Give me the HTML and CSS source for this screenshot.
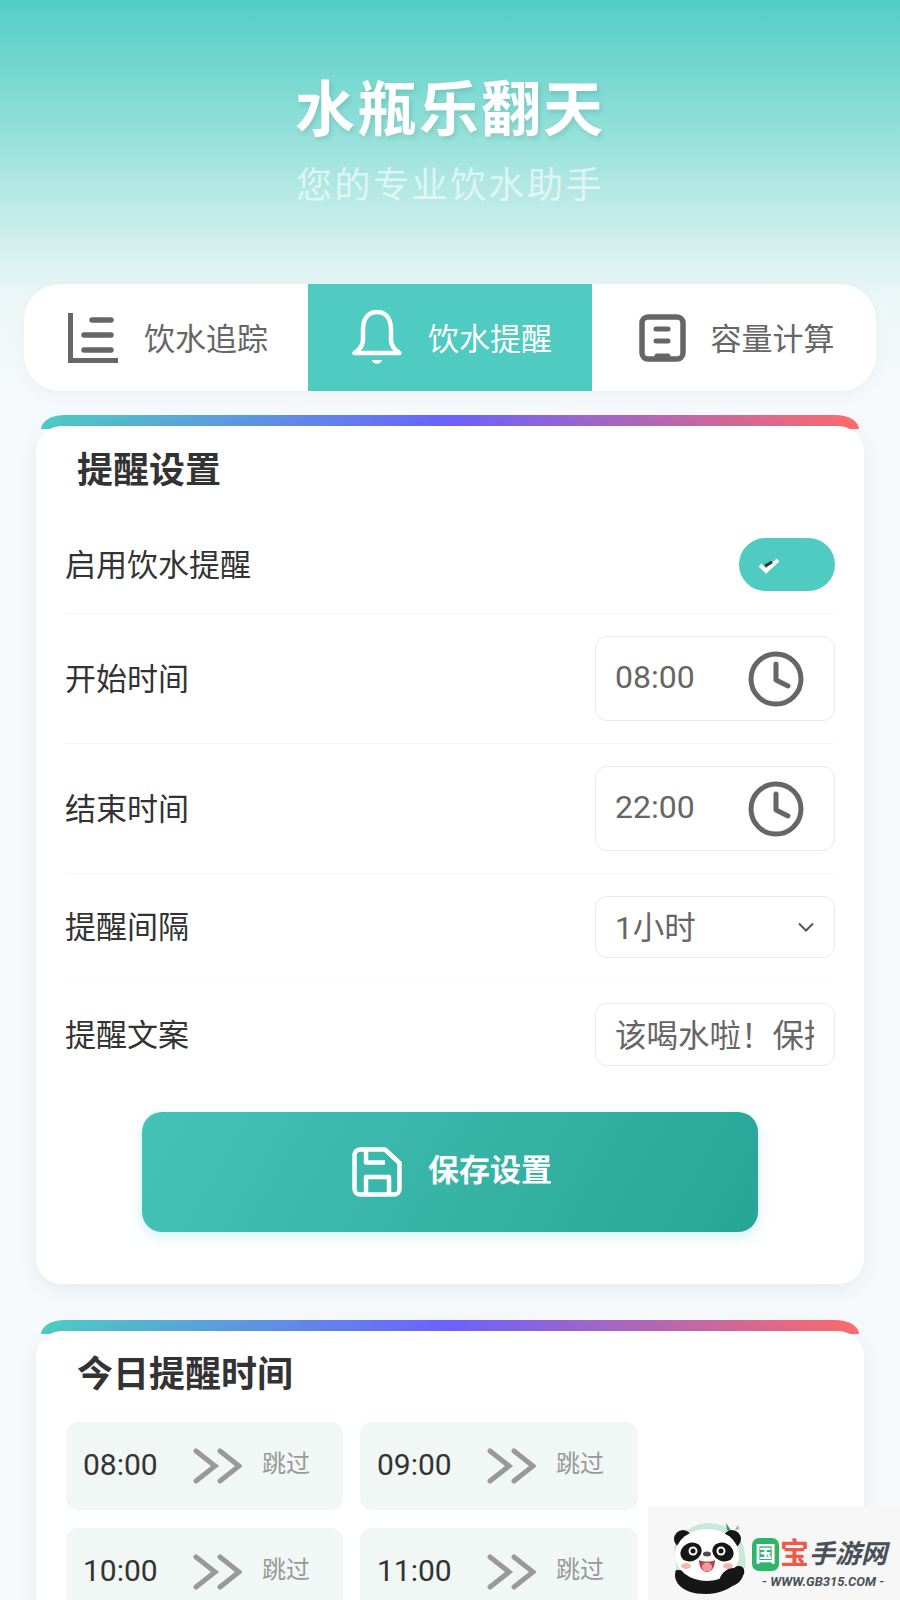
FILE: index.html
```html
<!DOCTYPE html>
<html lang="zh-CN">
<head>
    <meta charset="UTF-8">
    <meta name="viewport" content="width=device-width, initial-scale=1.0">
    <title>水瓶乐翻天</title>
    <link rel="stylesheet" href="styles.css">
</head>
<body>
    <header class="header">
        <h1>水瓶乐翻天</h1>
        <p>您的专业饮水助手</p>
    </header>

    <nav class="tabs">
        <div class="tab">
            <svg class="tab-icon" viewBox="0 0 50 50" fill="none" stroke="#666" stroke-width="5">
                <path d="M2.5 0V47.500H50"/>
                <path d="M24 7H43M16 22H43M16 37H43" stroke-width="5.500" stroke-linecap="round"/>
            </svg>
            <span>饮水追踪</span>
        </div>
        <div class="tab active">
            <svg class="tab-icon" viewBox="0 0 50 56" fill="none" stroke="#fff" stroke-width="4.500" stroke-linejoin="round">
                <path d="M25 2C15 2 11 10 11 20V30C11 36 7 40 2.500 43H47.500C43 40 39 36 39 30V20C39 10 35 2 25 2Z"/>
                <path d="M20 50C21 55 29 55 30 50Z" fill="#fff" stroke="none"/>
            </svg>
            <span>饮水提醒</span>
        </div>
        <div class="tab tab-last">
            <svg class="tab-icon" viewBox="0 0 50 50" fill="none" stroke="#666" stroke-width="5.500">
                <rect x="4" y="4" width="41" height="42" rx="6"/>
                <path d="M18 16H30M18 28H30M19 43H30" stroke-width="5" stroke-linecap="round"/>
            </svg>
            <span>容量计算</span>
        </div>
    </nav>

    <div class="card-bar"></div>
    <section class="card">
        <h2 class="card-title">提醒设置</h2>

        <div class="row">
            <label>启用饮水提醒</label>
            <div class="toggle">
                <svg viewBox="0 0 22 18" width="22" height="18" fill="none">
                    <path d="M2 9L8 15L20 4" stroke="#fff" stroke-width="4"/>
                    <path d="M7 10L14 6" stroke="#2b3a3a" stroke-width="3"/>
                </svg>
            </div>
        </div>

        <div class="row">
            <label>开始时间</label>
            <div class="field time-field">
                <span>08:00</span>
                <svg class="clock" viewBox="0 0 56 56" fill="none" stroke="#666" stroke-width="5" stroke-linecap="round" stroke-linejoin="round">
                    <circle cx="28" cy="28" r="25"/>
                    <path d="M28 13V29L40 35"/>
                </svg>
            </div>
        </div>

        <div class="row">
            <label>结束时间</label>
            <div class="field time-field">
                <span>22:00</span>
                <svg class="clock" viewBox="0 0 56 56" fill="none" stroke="#666" stroke-width="5" stroke-linecap="round" stroke-linejoin="round">
                    <circle cx="28" cy="28" r="25"/>
                    <path d="M28 13V29L40 35"/>
                </svg>
            </div>
        </div>

        <div class="row faint">
            <label>提醒间隔</label>
            <div class="field select-field">
                <span>1小时</span>
                <svg viewBox="0 0 16 10" width="16" height="10" fill="none" stroke="#555" stroke-width="2">
                    <path d="M1 1.500L8 8.500L15 1.500"/>
                </svg>
            </div>
        </div>

        <div class="row no-line">
            <label>提醒文案</label>
            <input class="field text-field" type="text" value="该喝水啦！保持水分，身体健康" readonly>
        </div>

        <button class="save-btn" type="button">
            <svg viewBox="0 0 50 50" width="50" height="50" fill="none" stroke="#fff" stroke-width="4.500" stroke-linejoin="round">
                <path d="M8 2.500H33L47.500 16V42A5.500 5.500 0 0 1 42 47.500H8A5.500 5.500 0 0 1 2.500 42V8A5.500 5.500 0 0 1 8 2.500Z"/>
                <path d="M14 3V15.500H33M14 47V30H37V47"/>
            </svg>
            <span>保存设置</span>
        </button>
    </section>

    <div class="card-bar second"></div>
    <section class="card">
        <h2 class="card-title today">今日提醒时间</h2>
        <div class="time-grid">
            <div class="time-item">
                <span class="time">08:00</span>
                <svg class="skip-icon" viewBox="0 0 49 36" fill="none" stroke="#999" stroke-width="5" stroke-linecap="round"><path d="M3 3L22 18L3 33M27 3L46 18L27 33"/></svg>
                <span class="skip">跳过</span>
            </div>
            <div class="time-item">
                <span class="time">09:00</span>
                <svg class="skip-icon" viewBox="0 0 49 36" fill="none" stroke="#999" stroke-width="5" stroke-linecap="round"><path d="M3 3L22 18L3 33M27 3L46 18L27 33"/></svg>
                <span class="skip">跳过</span>
            </div>
            <div class="time-item">
                <span class="time">10:00</span>
                <svg class="skip-icon" viewBox="0 0 49 36" fill="none" stroke="#999" stroke-width="5" stroke-linecap="round"><path d="M3 3L22 18L3 33M27 3L46 18L27 33"/></svg>
                <span class="skip">跳过</span>
            </div>
            <div class="time-item">
                <span class="time">11:00</span>
                <svg class="skip-icon" viewBox="0 0 49 36" fill="none" stroke="#999" stroke-width="5" stroke-linecap="round"><path d="M3 3L22 18L3 33M27 3L46 18L27 33"/></svg>
                <span class="skip">跳过</span>
            </div>
        </div>
    </section>

    <div class="watermark">
        <svg class="panda" viewBox="0 0 78 72">
            <path d="M4 26A37 37 0 0 1 74 26L76 44L66 60H8Z" fill="#c9e8da"/>
            <path d="M56 1L62 10L57 8Z" fill="#3c8f5c"/>
            <path d="M68 3L65 8L69 7Z" fill="#7fb58f"/>
            <circle cx="13" cy="17" r="9" fill="#161616"/>
            <circle cx="62" cy="17" r="9" fill="#161616"/>
            <path d="M6 48C2 58 10 72 36 72C50 72 62 66 66 60L74 52C76 44 68 42 64 46L52 50Z" fill="#161616"/>
            <ellipse cx="37" cy="33" rx="32" ry="26" fill="#fff"/>
            <ellipse cx="21" cy="30" rx="11" ry="9" fill="#161616" transform="rotate(-25 21 30)"/>
            <ellipse cx="53" cy="30" rx="11" ry="9" fill="#161616" transform="rotate(25 53 30)"/>
            <circle cx="23" cy="29" r="4.500" fill="#fff"/>
            <circle cx="51" cy="29" r="4.500" fill="#fff"/>
            <circle cx="23" cy="29" r="2.500" fill="#161616"/>
            <circle cx="51" cy="29" r="2.500" fill="#161616"/>
            <ellipse cx="37" cy="32" rx="4" ry="2.500" fill="#55484a"/>
            <path d="M29 38C33 40 41 40 45 38C45 46 41 50 37 50C33 50 29 46 29 38Z" fill="#b8404a"/>
            <ellipse cx="37" cy="45" rx="5" ry="4.500" fill="#f29aa0"/>
            <ellipse cx="16" cy="44" rx="5" ry="3" fill="#f6b7b0"/>
            <ellipse cx="58" cy="44" rx="5" ry="3" fill="#f6b7b0"/>
            <path d="M48 62C50 52 56 46 64 46C72 44 76 50 72 56C68 64 56 68 48 62Z" fill="#161616"/>
        </svg>
        <div class="brand">
            <div class="brand-name">
                <span class="brand-guo">国</span>
                <span class="brand-bao">宝</span>
                <span class="brand-rest">手游网</span>
            </div>
            <div class="brand-url">- WWW.GB315.COM -</div>
        </div>
    </div>
</body>
</html>
```

FILE: styles.css
```css
* {
    box-sizing: border-box;
}
html, body {
    height: 1600px;
    overflow: hidden;
}
body {
    position: relative;
    margin: 0;
    font-family: Roboto, "Noto Sans CJK SC", sans-serif;
    color: #333;
    background: linear-gradient(180deg, #52cdc5 0, #8fdfd8 125px, #d0efec 240px, #edf7f8 300px, #f6f9fc 390px) no-repeat;
    background-color: #f6f9fc;
}

.header {
    height: 284px;
    padding-top: 67px;
    text-align: center;
    color: #fff;
}
.header h1 {
    margin: 0;
    font-size: 60px;
    line-height: 88px;
    font-weight: 700;
    letter-spacing: 2px;
    text-shadow: 2px 3px 5px rgba(0,0,0,0.1);
}
.header p {
    margin: 9px 0 0;
    font-size: 36px;
    line-height: 44px;
    letter-spacing: 2.500px;
    color: rgba(255,255,255,0.6);
}

.tabs {
    display: flex;
    height: 107px;
    margin: 0 24px;
    overflow: hidden;
    background: #fff;
    border-radius: 36px;
    box-shadow: 0 4px 16px rgba(0,0,0,0.04);
}
.tab {
    flex: 1;
    display: flex;
    align-items: center;
    justify-content: center;
    gap: 26px;
    padding-left: 4px;
    font-size: 31px;
    color: #666;
}
.tab span {
    margin-top: -3px;
}
.tab.active {
    background: #50cbc1;
    color: #fff;
}
.tab-last {
    gap: 23px;
}
.tab-icon {
    width: 50px;
    height: 50px;
}
.tab.active .tab-icon {
    height: 56px;
}

.card-bar {
    height: 14px;
    margin: 24px 41px 0;
    border-radius: 24px 24px 0 0 / 14px 14px 0 0;
    background: linear-gradient(90deg, #4ecdc4, #6c63ff, #ff6b6b);
}
.card-bar.second {
    margin-top: 36px;
}
.card {
    margin: -3px 36px 0;
    padding: 0 29px 52px 30px;
    background: #fff;
    border-radius: 26px;
    box-shadow: 0 5px 20px rgba(0,0,0,0.06);
}
.card-title {
    margin: 0;
    padding: 20px 0 20px 11px;
    font-size: 36px;
    line-height: 50px;
    font-weight: 700;
}
.card-title.today {
    padding: 19px 0 22px 11px;
}

.row {
    display: flex;
    align-items: center;
    justify-content: space-between;
    padding: 22px 0;
    border-bottom: 1px solid #f4f5f6;
}
.row.faint {
    border-bottom-color: #fcfcfd;
}
.row.no-line {
    border-bottom: none;
}
.row label {
    margin: -5px 0 0 -1px;
    font-size: 31px;
    color: #333;
}

.toggle {
    display: flex;
    align-items: center;
    width: 96px;
    height: 53px;
    padding-left: 19px;
    background: #50cbc1;
    border-radius: 27px;
}

.field {
    display: flex;
    align-items: center;
    justify-content: space-between;
    width: 240px;
    padding: 0 20px 0 19px;
    font-family: inherit;
    font-size: 31.500px;
    color: #666;
    background: #fff;
    border: 1px solid #e8e9eb;
    border-radius: 12px;
}
.field span {
    margin-top: -4px;
}
.time-field {
    height: 85px;
    padding-right: 30px;
    font-size: 32px;
}
.clock {
    width: 56px;
    height: 56px;
}
.select-field {
    height: 62px;
}
.text-field {
    height: 63px;
    padding-bottom: 3px;
    outline: none;
}

.save-btn {
    display: flex;
    align-items: center;
    justify-content: center;
    gap: 26px;
    width: 616px;
    height: 120px;
    margin: 24px 0 0 76px;
    padding: 0 0 0 4px;
    font-family: inherit;
    font-size: 31px;
    font-weight: 700;
    color: #fff;
    background: linear-gradient(120deg, #46c3b7, #27a596);
    border: none;
    border-radius: 20px;
    box-shadow: 0 5px 14px rgba(78,205,196,0.25);
}
.save-btn span {
    margin-top: -10px;
}

.time-grid {
    display: grid;
    grid-template-columns: 277px 278px;
    gap: 18px 17px;
}
.time-item {
    display: flex;
    align-items: center;
    height: 88px;
    padding-left: 17px;
    background: #f1f7f5;
    border-radius: 12px;
}
.time {
    width: 76px;
    margin-top: -4px;
    font-size: 30px;
    color: #333;
}
.skip-icon {
    width: 49px;
    height: 36px;
    margin-left: 34px;
}
.skip {
    margin: -9px 0 0 20px;
    font-size: 24px;
    color: #999;
}

.watermark {
    position: absolute;
    right: 0;
    bottom: 0;
    display: flex;
    width: 252px;
    height: 94px;
    padding: 16px 0 0 22px;
    background: #f7f7f8;
}
.panda {
    width: 78px;
    height: 72px;
    flex-shrink: 0;
}
.brand {
    margin-left: 4px;
}
.brand-name {
    display: flex;
    align-items: center;
    height: 36px;
    margin-top: 14px;
    font-weight: 700;
}
.brand-guo {
    width: 27px;
    height: 33px;
    font-size: 21px;
    line-height: 33px;
    text-align: center;
    color: #fff;
    background: #2fb56a;
    border-radius: 7px;
}
.brand-bao {
    margin-left: 1px;
    font-size: 29px;
    line-height: 36px;
    color: #f0584a;
}
.brand-rest {
    font-size: 26px;
    line-height: 36px;
    font-style: italic;
    color: #4a5058;
}
.brand-url {
    margin: 2px 0 0 10px;
    font-size: 13px;
    line-height: 16px;
    font-weight: 700;
    font-style: italic;
    white-space: nowrap;
    color: #4a5058;
}
```
